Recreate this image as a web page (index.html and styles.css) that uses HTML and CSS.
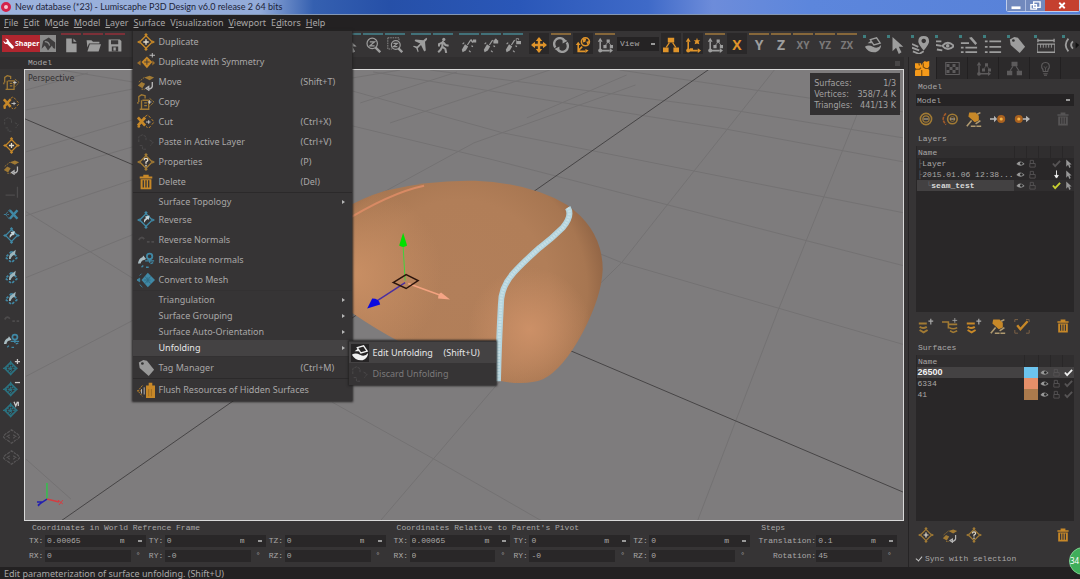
FILE: index.html
```
<!DOCTYPE html>
<html lang="en">

<head>
    <meta charset="UTF-8">
    <meta name="viewport" content="width=device-width, initial-scale=1.0">
    <title>Lumiscaphe P3D Design</title>
    <link rel="stylesheet" href="styles.css">
</head>

<body>
    <!-- icon sprite -->
    <svg class="sprite" aria-hidden="true">
        <symbol id="i-diamond" viewBox="0 0 20 20">
            <path d="M10 3L17 10L10 17L3 10Z" fill="none" stroke="currentColor" stroke-width="1.5"/>
            <path d="M10 0l2 2-2 2-2-2zM10 16l2 2-2 2-2-2zM0 10l3-2v4zM20 10l-3-2v4z" fill="currentColor"/>
            <path d="M10 7v6M7 10h6" stroke="#e4dccb" stroke-width="1.5"/>
        </symbol>
        <symbol id="i-diamond-q" viewBox="0 0 20 20">
            <path d="M10 3L17 10L10 17L3 10Z" fill="none" stroke="currentColor" stroke-width="1.5"/>
            <path d="M10 0l2 2-2 2-2-2zM10 16l2 2-2 2-2-2zM0 10l3-2v4zM20 10l-3-2v4z" fill="currentColor"/>
            <path d="M8 8q0-2 2-2t2 2q0 1-2 2v2M10 13v2" fill="none" stroke="#e4dccb" stroke-width="1.5"/>
        </symbol>
        <symbol id="i-sym" viewBox="0 0 20 20">
            <path d="M11 4L17 10L11 17L5 10Z" fill="currentColor"/>
            <path d="M0 11l4-3v6zM20 11l-3-3v6z" fill="currentColor" opacity=".7"/>
            <path d="M8 10h6M11 7v6" stroke="#3a3839"/>
            <path d="M17 0v5M14 2.5h6" stroke="#c9c9c9"/>
        </symbol>
        <symbol id="i-move" viewBox="0 0 20 20">
            <path d="M8 5l6-2 5 2-5 3zM1 14l4-4 4 2-3 5z" fill="currentColor"/>
            <path d="M2 10l6-5M5 18h4" stroke="currentColor" stroke-dasharray="2 1"/>
            <path d="M17 10v5q-1 3-5 3M10 17l3-2v4z" stroke="#b5b5b5" stroke-width="1.5" fill="none"/>
        </symbol>
        <symbol id="i-copy" viewBox="0 0 20 20">
            <path d="M2 10V4l3-2 4 1v3M1 12v-2M6 8h7v10H5V8M8 11h3M8 14h3M3 18h2" fill="none" stroke="currentColor" stroke-width="1.5"/>
            <path d="M14 6l5 4-5 5" fill="none" stroke="currentColor" stroke-dasharray="3 1"/>
            <path d="M12 10h4M14 8v4" stroke="#cfcfcf"/>
        </symbol>
        <symbol id="i-cut" viewBox="0 0 20 20">
            <path d="M1 5l8 9M9 5l-8 9" stroke="currentColor" stroke-width="3"/>
            <circle cx="2" cy="15" r="1.5" fill="currentColor"/>
            <path d="M9 4l3-2 7 8-6 7-3-2" fill="none" stroke="currentColor" stroke-dasharray="3 2"/>
            <path d="M10 10h5M13 8v4" stroke="#cfcfcf"/>
        </symbol>
        <symbol id="i-paste" viewBox="0 0 20 20">
            <path d="M2 10V4l4-2 4 2v4M3 14h3v4h4M14 8l4 2-3 4" fill="none" stroke="currentColor" stroke-dasharray="3 1"/>
        </symbol>
        <symbol id="i-trash" viewBox="0 0 20 20">
            <path d="M4 7h12v11H4zM3 4h14v2H3zM7 2h6v2H7z" fill="currentColor"/>
            <path d="M7 8v8M10 8v8M13 8v8" stroke="#3a3839" stroke-width="1.5"/>
        </symbol>
        <symbol id="i-reverse" viewBox="0 0 20 20">
            <path d="M10 3L17 10L10 17L3 10Z" fill="none" stroke="currentColor" stroke-width="1.5"/>
            <path d="M10 0l2 2-2 2-2-2zM10 16l2 2-2 2-2-2zM0 10l3-2v4zM20 10l-3-2v4z" fill="currentColor"/>
            <path d="M8 13q-1-4 2-5l-1-2 5-1-1 5-1-1q-2 1-4 4z" fill="#c4d4d9"/>
        </symbol>
        <symbol id="i-rev-dash" viewBox="0 0 20 20">
            <path d="M10 4l7 7-7 6-7-6z" fill="none" stroke="currentColor" stroke-width="2" stroke-dasharray="3 2"/>
            <path d="M7 13q0-6 3-7l5-4-1 6q-4 1-5 5z" fill="#9db6bd"/>
        </symbol>
        <symbol id="i-wave" viewBox="0 0 20 20">
            <path d="M2 10q3-5 6-1M11 12h3M16 12h3" fill="none" stroke="currentColor" stroke-width="2"/>
        </symbol>
        <symbol id="i-corner" viewBox="0 0 20 20">
            <path d="M17 2v13M3 12h11" fill="none" stroke="currentColor" stroke-width="1.5"/>
        </symbol>
        <symbol id="i-recalc" viewBox="0 0 20 20">
            <path d="M1 14q1-6 5-7l1-2 3 4-2 1q-3 0-4 4z" fill="#a9bcc2"/>
            <circle cx="14" cy="6" r="3" fill="none" stroke="currentColor" stroke-width="2"/>
            <path d="M9 11h10M14 9v4M5 18l2-2M10 18h3M15 14l3-1" stroke="currentColor" stroke-width="1.5"/>
        </symbol>
        <symbol id="i-mesh" viewBox="0 0 20 20">
            <path d="M12 2L20 10L12 18L5 10Z" fill="currentColor"/>
            <path d="M0 10l3-2v4zM3 5l2-2M3 15l3 3" stroke="currentColor" fill="currentColor"/>
            <path d="M8 10h7M12 7v6M9 6l6 8M9 14l6-8" stroke="#2e6b82"/>
        </symbol>
        <symbol id="i-del-x" viewBox="0 0 20 20">
            <path d="M8 4l-5 6 5 6M1 10h6" fill="none" stroke="currentColor" stroke-dasharray="3 1"/>
            <path d="M8 5l9 10M17 5l-9 10" stroke="currentColor" stroke-width="3"/>
        </symbol>
        <symbol id="i-net" viewBox="0 0 20 20">
            <path d="M9 4l7 7-7 7-7-7z" fill="none" stroke="currentColor" stroke-width="2"/>
            <path d="M5 8l7 7M12 8l-7 7M9 2v18M0 11h18" stroke="currentColor" stroke-width="1.5" stroke-dasharray="2 1"/>
        </symbol>
        <symbol id="i-group" viewBox="0 0 20 20">
            <path d="M5 6l5-4 5 4M5 14l5 4 5-4M4 6l-4 4 4 4M16 6l4 4-4 4M8 8l-3 2 3 2M12 8l3 2-3 2" fill="none" stroke="currentColor" stroke-width="1.5" stroke-dasharray="4 1"/>
        </symbol>
        <symbol id="i-tag" viewBox="0 0 20 20">
            <path d="M2 4l5-3 4 1 8 10-6 7L3 10z" fill="currentColor"/>
            <circle cx="6" cy="5" r="1.5" fill="#333"/>
        </symbol>
        <symbol id="i-flush" viewBox="0 0 20 20">
            <path d="M6 5l-5 6 5 6M0 11h5" fill="none" stroke="currentColor" stroke-dasharray="2 1"/>
            <path d="M10 5h10v14H10zM13 2h4v3h-4z" fill="currentColor"/>
            <path d="M5 9v5M8 7v8" stroke="#bbb"/>
            <path d="M13 9v8M16 9v8" stroke="#9a6a20"/>
        </symbol>
        <symbol id="i-unfold" viewBox="0 0 20 20">
            <path d="M1 12q4-3 9 0t9-2q0 6-6 8-8 1-12-6zM4 8l4-3 1 3z" fill="currentColor"/>
            <path d="M7 4l7-2 4 6-7 2z" fill="none" stroke="currentColor" stroke-width="1.5"/>
        </symbol>
        <symbol id="i-wrench" viewBox="0 0 20 20">
            <path d="M2 5l4 3 2-3-3-3q5-1 6 4l7 8q1 4-3 3l-7-7q-5 1-6-5z" fill="currentColor"/>
        </symbol>
        <symbol id="i-bucket" viewBox="0 0 20 20">
            <path d="M2 16L4 6l7-4 8 6v8q-3 0-4-4l-5 6-4-6z" fill="currentColor"/>
            <path d="M6 7q5 0 6 5" stroke="#8b8b8b" stroke-width="1.5" fill="none"/>
        </symbol>
        <symbol id="i-file" viewBox="0 0 20 20"><path d="M4 2h7v6h6v11H4zM13 2l4 4h-4z" fill="currentColor"/></symbol>
        <symbol id="i-folder" viewBox="0 0 20 20"><path d="M2 4h6l2 2h8v2H5l-2 5zM6 9h14l-3 9H3z" fill="currentColor"/></symbol>
        <symbol id="i-save" viewBox="0 0 20 20"><path d="M2 3h14l2 2v13H2z" fill="currentColor"/><path d="M5 4h9v5H5zM6 12h8v6H6z" fill="#3a3839"/><path d="M8 13h3v4H8z" fill="currentColor"/></symbol>
        <symbol id="i-zoom" viewBox="0 0 20 20">
            <circle cx="9" cy="8" r="6.5" fill="none" stroke="currentColor" stroke-width="1.5"/>
            <path d="M13 13l6 6" stroke="currentColor" stroke-width="3"/>
            <path d="M6 6h6l-6 5h6" fill="none" stroke="currentColor" stroke-width="1.5"/>
        </symbol>
        <symbol id="i-zoom-box" viewBox="0 0 20 20">
            <path d="M1 1h14v4M1 1v14h5" fill="none" stroke="currentColor" stroke-dasharray="2 1"/>
            <circle cx="11" cy="10" r="5.5" fill="none" stroke="currentColor" stroke-width="1.5"/>
            <path d="M14 14l5 5" stroke="currentColor" stroke-width="3"/>
            <path d="M8 8h5l-5 4h5" fill="none" stroke="currentColor" stroke-width="1.5"/>
        </symbol>
        <symbol id="i-plane" viewBox="0 0 20 20"><path d="M19 1q-3-1-6 3L3 3 2 5l7 3-4 4-4-1-1 1 4 2 2 5 1-1-1-4 4-4 4 8 2-1-1-11q4-3 2-5z" fill="currentColor"/></symbol>
        <symbol id="i-walk" viewBox="0 0 20 20">
            <circle cx="11" cy="3" r="2" fill="currentColor"/>
            <path d="M10 5L9 12 13 15 14 20M9 12L7 16 4 19M9 7L5 9V12M11 7L13 10 17 11" fill="none" stroke="currentColor" stroke-width="2.5"/>
        </symbol>
        <symbol id="i-joy" viewBox="0 0 20 20">
            <path d="M5 9l4 3-3 5-4 2-1-3z" fill="currentColor"/>
            <path d="M8 10l4-6M2 9l2-2M10 17l2 2M13 11l2 1" stroke="currentColor" stroke-width="1.5"/>
        </symbol>
        <symbol id="i-arrows" viewBox="0 0 20 20">
            <path d="M10 2v16M2 10h16" stroke="currentColor" stroke-width="3"/>
            <path d="M10 0l4 5H6zM10 20l4-5H6zM0 10l5-4v8zM20 10l-5-4v8z" fill="currentColor"/>
        </symbol>
        <symbol id="i-rotate" viewBox="0 0 20 20">
            <path d="M3 13A7 7 0 0 1 14 4M17 7A7 7 0 0 1 6 16" fill="none" stroke="currentColor" stroke-width="3"/>
            <path d="M12 1l6 4-6 3zM8 19l-6-4 6-3z" fill="currentColor"/>
        </symbol>
        <symbol id="i-axis-ball" viewBox="0 0 20 20">
            <path d="M4 9v9h9M4 17l5-5" fill="none" stroke="currentColor" stroke-width="2"/>
            <path d="M4 6l3 4H1zM17 17l-4-2v5z" fill="currentColor"/>
            <circle cx="13" cy="6" r="5" fill="none" stroke="currentColor" stroke-width="2"/>
            <path d="M10 2l4 0-1 4-3 1zM14 6l4-1-2 5z" fill="currentColor"/>
        </symbol>
        <symbol id="i-axis" viewBox="0 0 20 20">
            <path d="M4 6v11h12" fill="none" stroke="currentColor" stroke-width="2"/>
            <circle cx="4" cy="17" r="2.5" fill="currentColor"/>
            <path d="M4 1l3 5H1zM20 17l-4-3v6zM12 3h4v4h-4zM8 10h4v4H8zM16 10h4v4h-4z" fill="currentColor"/>
            <path d="M14 6l-4 5M14 6l4 5" stroke="currentColor"/>
        </symbol>
        <symbol id="i-axis-star" viewBox="0 0 20 20">
            <path d="M4 6v11h12M6 15h4" fill="none" stroke="currentColor" stroke-width="2"/>
            <circle cx="4" cy="17" r="2.5" fill="currentColor"/>
            <path d="M4 1l3 5H1zM20 17l-4-3v6zM15 1l1 3h3l-2 2 1 3-3-1-3 1 1-3-2-2h3z" fill="currentColor"/>
        </symbol>
        <symbol id="i-tree" viewBox="0 0 20 20"><path d="M6 1h8v6H6zM0 13h7v6H0zM13 13h7v6h-7z" fill="currentColor"/><path d="M8 7l-4 6M12 7l4 6" stroke="currentColor" stroke-width="1.5"/></symbol>
        <symbol id="i-cursor" viewBox="0 0 20 20"><path d="M5 1l12 11h-5l3 6-3 2-3-7-4 4z" fill="currentColor"/></symbol>
        <symbol id="i-pin" viewBox="0 0 20 20">
            <path d="M13 0q6 0 6 6 0 3-6 10-6-7-6-10 0-6 6-6zM13 3a2.5 2.5 0 1 0 .1 0z" fill="currentColor" fill-rule="evenodd"/>
            <path d="M0 9l7 3M0 13l8 3M1 17l7 3 5-3" stroke="currentColor" stroke-width="2" fill="none"/>
        </symbol>
        <symbol id="i-layer-eye" viewBox="0 0 20 20">
            <path d="M0 6h6M0 10l6 1M1 15l6 1" stroke="currentColor" stroke-width="2"/>
            <path d="M7 11q6-7 13 0-7 7-13 0z" fill="none" stroke="currentColor" stroke-width="2"/>
            <circle cx="13" cy="11" r="2" fill="currentColor"/>
        </symbol>
        <symbol id="i-list" viewBox="0 0 20 20"><path d="M1 6h3M6 6h13M1 12h3M6 12h13M1 18h3M6 18h13" stroke="currentColor" stroke-width="2"/></symbol>
        <symbol id="i-list-tool" viewBox="0 0 20 20"><path d="M1 8h9M1 13h3M6 13h13M1 18h3M6 18h13" stroke="currentColor" stroke-width="2"/><path d="M10 2l3-1 6 7-2 2z" fill="currentColor"/></symbol>
        <symbol id="i-ruler" viewBox="0 0 20 20"><path d="M0 9h20v9H0zM1 5h18M1 3v4M19 3v4" fill="none" stroke="currentColor" stroke-width="1.5"/><path d="M4 9v4M7 9v4M10 9v4M13 9v4M16 9v4" stroke="currentColor"/></symbol>
        <symbol id="i-rings" viewBox="0 0 20 20"><path d="M6 3q-6 7 0 14M11 6q-4 4 0 8" fill="none" stroke="currentColor" stroke-width="2"/><path d="M14 7l4 3-4 4z" fill="#111"/></symbol>
        <symbol id="i-puzzle" viewBox="0 0 20 20"><path d="M0 3h8l1 3 1-3 3-3 2 1 4-1v7l-2 3 2 2v8H0v-7l2-2-2-2z" fill="currentColor"/><path d="M0 11h6l2-2M11 3v5l3 2h5M9 12v8M5 3l1 3" stroke="#7a4d10" stroke-width="1.5" fill="none"/></symbol>
        <symbol id="i-checker" viewBox="0 0 20 20"><path d="M1 2h18v16H1z" fill="none" stroke="currentColor" stroke-width="1.5"/><path d="M2 4h4v4H2zM10 4h4v4h-4zM6 8h4v4H6zM14 8h4v4h-4zM2 12h4v4H2zM10 12h4v4h-4z" fill="currentColor"/></symbol>
        <symbol id="i-bulb" viewBox="0 0 20 20"><path d="M7 14q0-3-2-5-1-7 5-7t5 7q-2 2-2 5zM7 17h6M8 19h4" fill="none" stroke="currentColor" stroke-width="1.5"/><path d="M8 7l2 3 2-3M10 9v5" stroke="currentColor" fill="none"/></symbol>
        <symbol id="i-ring" viewBox="0 0 20 20"><circle cx="10" cy="10" r="7" fill="none" stroke="currentColor" stroke-width="2"/><circle cx="10" cy="10" r="4" fill="none" stroke="currentColor" stroke-width="1.5"/><path d="M7 10h6" stroke="#e8d8b8"/></symbol>
        <symbol id="i-ring2" viewBox="0 0 20 20"><path d="M5 3q-7 7 0 14" fill="none" stroke="#a35a28" stroke-width="2" stroke-dasharray="4 1"/><circle cx="13" cy="10" r="6" fill="none" stroke="currentColor" stroke-width="2"/><circle cx="13" cy="10" r="3" fill="none" stroke="currentColor"/><path d="M10 10h6" stroke="#e8d8b8"/></symbol>
        <symbol id="i-clean" viewBox="0 0 20 20"><path d="M4 2h8l4 4v6l-5 2-8-7z" fill="currentColor"/><path d="M1 19l6-7M6 19h6M12 16l6-4M14 4l4-2M13 19h6" stroke="#b09a70" stroke-width="2" fill="none"/></symbol>
        <symbol id="i-ring-in" viewBox="0 0 20 20"><path d="M0 10h6" stroke="#b5b5b5" stroke-width="2"/><path d="M5 6l4 4-4 4z" fill="#b5b5b5"/><circle cx="14" cy="10" r="5" fill="currentColor" opacity=".85"/><circle cx="14" cy="10" r="2" fill="#f5b544"/></symbol>
        <symbol id="i-ring-out" viewBox="0 0 20 20"><circle cx="6" cy="10" r="5" fill="currentColor" opacity=".85"/><circle cx="6" cy="10" r="2" fill="#f5b544"/><path d="M11 10h5" stroke="#b5b5b5" stroke-width="2"/><path d="M15 6l5 4-5 4z" fill="#b5b5b5"/></symbol>
        <symbol id="i-layer-add" viewBox="0 0 20 20"><path d="M1 7h10M2 11q4 3 9 0M2 15l5 3 5-3" fill="none" stroke="currentColor" stroke-width="2.5"/><path d="M16 1v7M13 4h6" stroke="#a9a9a9" stroke-width="1.5"/></symbol>
        <symbol id="i-layer-sub" viewBox="0 0 20 20"><path d="M0 5h8v8M9 8h10M9 12q5 3 10 0M10 16l4 2 5-2" fill="none" stroke="currentColor" stroke-width="2"/><path d="M16 0v6M13 3h6" stroke="#a9a9a9"/></symbol>
        <symbol id="i-select" viewBox="0 0 20 20"><path d="M4 9l4 5L17 4" fill="none" stroke="currentColor" stroke-width="3"/><path d="M1 5V2h4M15 2h4v3M1 15v4h4M15 19h4v-4" fill="none" stroke="#8a6b4a"/></symbol>
        <symbol id="i-eye" viewBox="0 0 20 20"><path d="M1 11q8-11 18 0-9 8-18 0z" fill="currentColor"/><circle cx="12" cy="10" r="3" fill="#222"/></symbol>
        <symbol id="i-lock" viewBox="0 0 20 20"><path d="M5 10V3h7v7M4 10h12v8H4z" fill="none" stroke="currentColor" stroke-width="2"/></symbol>
        <symbol id="i-check" viewBox="0 0 20 20"><path d="M2 10l5 6L18 4" fill="none" stroke="currentColor" stroke-width="4"/></symbol>
        <symbol id="i-down" viewBox="0 0 20 20"><path d="M10 1v14M6 12l4 6 4-6z" stroke="currentColor" stroke-width="2" fill="currentColor"/></symbol>
    </svg>

    <div class="app">
        <header class="titlebar">
            <span class="app-icon"></span>
            <h1 class="app-title">New database (*23) - Lumiscaphe P3D Design v6.0 release 2 64 bits</h1>
            <div class="window-buttons">
                <button class="win win-min" aria-label="Minimize"><svg viewBox="0 0 20 12"><path d="M5 7h10v3H5z" fill="#fff"/></svg></button>
                <button class="win win-max" aria-label="Restore"><svg viewBox="0 0 20 12"><path d="M8 2h7v6h-7zM5 5h6v5H5z" fill="none" stroke="#fff" stroke-width="1.5"/></svg></button>
                <button class="win win-close" aria-label="Close"><svg viewBox="0 0 20 12"><path d="M7 3l6 6M13 3l-6 6" stroke="#fff" stroke-width="2"/></svg></button>
            </div>
        </header>

        <nav class="menubar">
            <button class="menu-title"><u>F</u>ile</button>
            <button class="menu-title"><u>E</u>dit</button>
            <button class="menu-title">M<u>o</u>de</button>
            <button class="menu-title"><u>M</u>odel</button>
            <button class="menu-title"><u>L</u>ayer</button>
            <div class="menu-holder">
                <button class="menu-title"><u>S</u>urface</button>
                <ul class="menu">
                    <li class="item"><svg class="icon orange"><use href="#i-diamond"/></svg><span>Duplicate</span></li>
                    <li class="item"><svg class="icon orange"><use href="#i-sym"/></svg><span>Duplicate with Symmetry</span></li>
                    <li class="item"><svg class="icon tan"><use href="#i-move"/></svg><span>Move</span><kbd>(Shift+T)</kbd></li>
                    <li class="item"><svg class="icon tan"><use href="#i-copy"/></svg><span>Copy</span></li>
                    <li class="item"><svg class="icon orange"><use href="#i-cut"/></svg><span>Cut</span><kbd>(Ctrl+X)</kbd></li>
                    <li class="item"><svg class="icon faint"><use href="#i-paste"/></svg><span>Paste in Active Layer</span><kbd>(Ctrl+V)</kbd></li>
                    <li class="item"><svg class="icon tan"><use href="#i-diamond-q"/></svg><span>Properties</span><kbd>(P)</kbd></li>
                    <li class="item"><svg class="icon orange"><use href="#i-trash"/></svg><span>Delete</span><kbd>(Del)</kbd></li>
                    <li class="sep"></li>
                    <li class="item short more"><span>Surface Topology</span></li>
                    <li class="item"><svg class="icon blue"><use href="#i-reverse"/></svg><span>Reverse</span></li>
                    <li class="item"><svg class="icon faint"><use href="#i-wave"/></svg><span>Reverse Normals</span></li>
                    <li class="item"><svg class="icon blue"><use href="#i-recalc"/></svg><span>Recalculate normals</span></li>
                    <li class="item"><svg class="icon blue"><use href="#i-mesh"/></svg><span>Convert to Mesh</span></li>
                    <li class="sep plain"></li>
                    <li class="item short more"><span>Triangulation</span></li>
                    <li class="item short more"><span>Surface Grouping</span></li>
                    <li class="item short more"><span>Surface Auto-Orientation</span></li>
                    <li class="item short more open">
                        <span>Unfolding</span>
                        <ul class="submenu">
                            <li class="item open"><svg class="icon white"><use href="#i-unfold"/></svg><span>Edit Unfolding</span><kbd>(Shift+U)</kbd></li>
                            <li class="item off"><svg class="icon faint"><use href="#i-paste"/></svg><span>Discard Unfolding</span></li>
                        </ul>
                    </li>
                    <li class="sep plain"></li>
                    <li class="item"><svg class="icon grey"><use href="#i-tag"/></svg><span>Tag Manager</span><kbd>(Ctrl+M)</kbd></li>
                    <li class="sep"></li>
                    <li class="item"><svg class="icon orange"><use href="#i-flush"/></svg><span>Flush Resources of Hidden Surfaces</span></li>
                </ul>
            </div>
            <button class="menu-title">V<u>i</u>sualization</button>
            <button class="menu-title"><u>V</u>iewport</button>
            <button class="menu-title">E<u>d</u>itors</button>
            <button class="menu-title"><u>H</u>elp</button>
        </nav>

        <div class="toolbar">
            <div class="mode-switch">
                <button class="shaper"><svg class="icon"><use href="#i-wrench"/></svg>Shaper</button>
                <button class="matter" aria-label="Matter"><svg class="icon"><use href="#i-bucket"/></svg></button>
            </div>
            <div class="tools files">
                <button class="tool red-top" aria-label="New"><svg class="icon"><use href="#i-file"/></svg></button>
                <button class="tool red-top" aria-label="Open"><svg class="icon"><use href="#i-folder"/></svg></button>
                <button class="tool red-top" aria-label="Save"><svg class="icon"><use href="#i-save"/></svg></button>
            </div>
            <div class="tools">
                <button class="tool teal-top" aria-label="Pick"><svg class="icon"><use href="#i-cursor"/></svg></button>
                <button class="tool teal-top" aria-label="Zoom"><svg class="icon"><use href="#i-zoom"/></svg></button>
                <button class="tool teal-top" aria-label="Zoom box"><svg class="icon"><use href="#i-zoom-box"/></svg></button>
            </div>
            <div class="tools">
                <button class="tool teal-top" aria-label="Fly"><svg class="icon"><use href="#i-plane"/></svg></button>
                <button class="tool teal-top" aria-label="Walk"><svg class="icon"><use href="#i-walk"/></svg></button>
            </div>
            <div class="tools">
                <button class="tool teal-top" aria-label="Joystick"><svg class="icon" viewBox="0 0 20 20"><use href="#i-joy"/><path d="M12 3l3 4M16 3v4M18 3v4" stroke="currentColor" stroke-width="2"/></svg></button>
                <button class="tool teal-top" aria-label="Joystick lock"><svg class="icon" viewBox="0 0 20 20"><use href="#i-joy"/><path d="M13 4h6v4h-6zM14 4q2-4 4 0" fill="currentColor"/></svg></button>
                <button class="tool teal-top" aria-label="Joystick unlock"><svg class="icon" viewBox="0 0 20 20"><use href="#i-joy"/><path d="M14 5h6v4h-6z" fill="currentColor"/><path d="M14 5V2h3v2" fill="none" stroke="currentColor"/></svg></button>
            </div>
            <div class="tools transform">
                <button class="tool on" aria-label="Translate"><svg class="icon"><use href="#i-arrows"/></svg></button>
                <button class="tool gold-top" aria-label="Rotate"><svg class="icon"><use href="#i-rotate"/></svg></button>
                <button class="tool on" aria-label="World axis"><svg class="icon"><use href="#i-axis-ball"/></svg></button>
                <button class="tool gold-top" aria-label="Local axis"><svg class="icon"><use href="#i-axis"/></svg></button>
                <select class="view-select" aria-label="Axis frame"><option>View</option></select>
                <button class="tool on" aria-label="Hierarchy"><svg class="icon"><use href="#i-tree"/></svg></button>
                <button class="tool on" aria-label="Pivot"><svg class="icon"><use href="#i-axis-star"/></svg></button>
                <button class="tool gold-top" aria-label="Axis tree"><svg class="icon"><use href="#i-axis"/></svg></button>
                <button class="tool letter on">X</button>
                <button class="tool letter gold-top">Y</button>
                <button class="tool letter gold-top">Z</button>
                <button class="tool pair gold-top">XY</button>
                <button class="tool pair gold-top">YZ</button>
                <button class="tool pair gold-top">ZX</button>
            </div>
            <div class="tools panels">
                <button class="tool dot" aria-label="Unfold editor"><svg class="icon"><use href="#i-unfold"/></svg></button>
                <button class="tool dot" aria-label="Selection"><svg class="icon"><use href="#i-cursor"/></svg></button>
                <button class="tool dot" aria-label="Position layers"><svg class="icon"><use href="#i-pin"/></svg></button>
                <button class="tool dot" aria-label="Visibility layers"><svg class="icon"><use href="#i-layer-eye"/></svg></button>
                <button class="tool dot" aria-label="List tools"><svg class="icon"><use href="#i-list-tool"/></svg></button>
                <button class="tool dot" aria-label="List"><svg class="icon"><use href="#i-list"/></svg></button>
                <button class="tool dot" aria-label="Tags"><svg class="icon"><use href="#i-tag"/></svg></button>
                <button class="tool dot wide" aria-label="Measure"><svg class="icon"><use href="#i-ruler"/></svg></button>
                <button class="tool dot" aria-label="More"><svg class="icon"><use href="#i-rings"/></svg></button>
            </div>
        </div>

        <div class="workspace">
            <main class="center">
                <div class="tab-row"><span class="tab">Model</span><span class="tab-close"></span></div>
                <div class="stage">
                    <div class="side-tools">
                        <div class="side-group">
                            <button aria-label="Copy"><svg class="icon tan"><use href="#i-copy"/></svg></button>
                            <button aria-label="Cut"><svg class="icon orange"><use href="#i-cut"/></svg></button>
                            <button aria-label="Paste"><svg class="icon faint"><use href="#i-paste"/></svg></button>
                            <button aria-label="Duplicate"><svg class="icon orange"><use href="#i-diamond"/></svg></button>
                            <button aria-label="Move"><svg class="icon tan"><use href="#i-move"/></svg></button>
                        </div>
                        <div class="side-group">
                            <button aria-label="Corner"><svg class="icon faint"><use href="#i-corner"/></svg></button>
                            <button aria-label="Remove"><svg class="icon blue"><use href="#i-del-x"/></svg></button>
                            <button aria-label="Reverse"><svg class="icon blue"><use href="#i-reverse"/></svg></button>
                            <button aria-label="Reverse patch"><svg class="icon blue"><use href="#i-rev-dash"/></svg></button>
                            <button aria-label="Reverse group"><svg class="icon blue"><use href="#i-rev-dash"/></svg></button>
                            <button aria-label="Reverse all"><svg class="icon blue"><use href="#i-rev-dash"/></svg></button>
                            <button aria-label="Normals"><svg class="icon faint"><use href="#i-wave"/></svg></button>
                            <button aria-label="Recalculate"><svg class="icon blue"><use href="#i-recalc"/></svg></button>
                        </div>
                        <div class="side-group">
                            <button aria-label="Add mesh"><svg class="icon sea" viewBox="0 0 20 20"><use href="#i-net"/><path d="M17 0v6M14 3h6" stroke="#c9c9c9" stroke-width="1.5"/></svg></button>
                            <button aria-label="Remove mesh"><svg class="icon sea" viewBox="0 0 20 20"><use href="#i-net"/><path d="M14 3h6" stroke="#c9c9c9" stroke-width="1.5"/></svg></button>
                            <button aria-label="Mesh percent"><svg class="icon sea" viewBox="0 0 20 20"><use href="#i-net"/><path d="M13 1l2 5 2-5M18 1v5" fill="none" stroke="#c9c9c9" stroke-width="1.5"/></svg></button>
                        </div>
                        <div class="side-group">
                            <button aria-label="Group"><svg class="icon dim"><use href="#i-group"/></svg></button>
                            <button aria-label="Ungroup"><svg class="icon dim"><use href="#i-group"/></svg></button>
                        </div>
                    </div>
                    <div class="viewport">
                        <svg class="scene" viewBox="24 69 880 453" preserveAspectRatio="xMidYMid slice">
                            <defs>
                                <radialGradient id="skin" gradientUnits="userSpaceOnUse" cx="460" cy="290" r="150">
                                    <stop offset="0" stop-color="#b27f5a"/>
                                    <stop offset=".6" stop-color="#b17e58"/>
                                    <stop offset=".85" stop-color="#a77651"/>
                                    <stop offset="1" stop-color="#8f6344"/>
                                </radialGradient>
                                <radialGradient id="glow" gradientUnits="userSpaceOnUse" cx="530" cy="330" r="62">
                                    <stop offset="0" stop-color="#cc9067"/>
                                    <stop offset="1" stop-color="#cc9067" stop-opacity="0"/>
                                </radialGradient>
                                <radialGradient id="glow-left" gradientUnits="userSpaceOnUse" cx="352" cy="275" r="90">
                                    <stop offset="0" stop-color="#c98f64"/>
                                    <stop offset="1" stop-color="#c98f64" stop-opacity="0"/>
                                </radialGradient>
                                <path id="shape" d="M340 211Q362 198 385 191Q430 180 475 181Q530 183 567 205Q603 230 603 270Q602 297 583 333Q563 370 543 380Q525 387 497 381L430 356Q390 341 340 305Z"/>
                            </defs>
                            <!-- floor grid -->
                            <g class="grid">
                                <path d="M871 73L857 117L778 313L698 522M775 70L690 177L622 263L499 383L380 522M636 85L474 143L340 216M352 78L400 70M360 103L457 72M390 123L550 70M527 118L627 75"/>
                                <path d="M25 278L132 235M25 216L132 180M25 178L132 147M25 152L132 120M25 110L132 89M25 90L87 73M25 377L132 321"/>
                                <path d="M620 70L904 112M430 70L720 108L904 138M373 72L720 128L904 162M352 91L503 133L904 213M352 126L493 160L904 266M590 250L622 263L904 345M332 403L434 460L542 522M25 212L134 280M25 460L70 500M60 70L132 82"/>
                            </g>
                            <path class="grid-axis" d="M24 119L904 493M710 69L60 522"/>
                            <!-- model -->
                            <use href="#shape" fill="url(#skin)"/>
                            <use href="#shape" fill="url(#glow)"/>
                            <use href="#shape" fill="url(#glow-left)"/>
                            <path class="seam-old" d="M340 224Q390 193 424 186"/>
                            <path class="seam" d="M568 208Q573 216 563 228Q552 239 540 248Q523 263 514 273Q501 287 501 305Q499 340 498 382"/>
                            <path class="seam-mesh" d="M568 208Q573 216 563 228Q552 239 540 248Q523 263 514 273Q501 287 501 305Q499 340 498 382"/>
                            <!-- move gizmo -->
                            <path d="M405 281L403 247" stroke="#3ed33c"/>
                            <path d="M403 233l4 13q-4 3-8 0z" fill="#00e100"/>
                            <path d="M405 283L376 302" stroke="#4b2fa0" stroke-width="1.5"/>
                            <path d="M367 309l5-10q7 0 8 6z" fill="#0a0ae0"/>
                            <path d="M408 284L441 296" stroke="#f3a27f" stroke-width="1.5"/>
                            <path d="M450 300l-12-1q0-4 3-6z" fill="#f5a585"/>
                            <path d="M393 283L406 275L418 281L406 289Z" fill="none" stroke="#2b140c" stroke-width="1.5"/>
                            <!-- world axis -->
                            <path d="M46 500V484" stroke="#35c04d" stroke-width="1.5"/>
                            <path d="M46 500L58 503" stroke="#d63c40" stroke-width="1.5"/>
                            <path d="M46 500L37 506M36 503h5l-4 4" fill="none" stroke="#231fb0" stroke-width="1.5"/>
                            <path d="M57 501l5 4M62 501l-4 5" stroke="#d63c40"/>
                        </svg>
                        <span class="view-name">Perspective</span>
                        <dl class="stats">
                            <dt>Surfaces:</dt><dd>1/3</dd>
                            <dt>Vertices:</dt><dd>358/7.4 K</dd>
                            <dt>Triangles:</dt><dd>441/13 K</dd>
                        </dl>
                    </div>
                </div>

                <form class="coords">
                    <fieldset>
                        <legend>Coordinates in World Refrence Frame</legend>
                        <div class="fields">
                            <div class="field"><label for="wtx">TX:</label><div class="box"><input id="wtx" value="0.00065"><select aria-label="TX unit"><option>m</option></select></div></div>
                            <div class="field"><label for="wty">TY:</label><div class="box"><input id="wty" value="0"><select aria-label="TY unit"><option>m</option></select></div></div>
                            <div class="field"><label for="wtz">TZ:</label><div class="box"><input id="wtz" value="0"><select aria-label="TZ unit"><option>m</option></select></div></div>
                            <div class="field"><label for="wrx">RX:</label><div class="box"><input id="wrx" value="0"></div><i>°</i></div>
                            <div class="field"><label for="wry">RY:</label><div class="box"><input id="wry" value="-0"></div><i>°</i></div>
                            <div class="field"><label for="wrz">RZ:</label><div class="box"><input id="wrz" value="0"></div><i>°</i></div>
                        </div>
                    </fieldset>
                    <fieldset>
                        <legend>Coordinates Relative to Parent's Pivot</legend>
                        <div class="fields">
                            <div class="field"><label for="ptx">TX:</label><div class="box"><input id="ptx" value="0.00065"><select aria-label="TX unit"><option>m</option></select></div></div>
                            <div class="field"><label for="pty">TY:</label><div class="box"><input id="pty" value="0"><select aria-label="TY unit"><option>m</option></select></div></div>
                            <div class="field"><label for="ptz">TZ:</label><div class="box"><input id="ptz" value="0"><select aria-label="TZ unit"><option>m</option></select></div></div>
                            <div class="field"><label for="prx">RX:</label><div class="box"><input id="prx" value="0"></div><i>°</i></div>
                            <div class="field"><label for="pry">RY:</label><div class="box"><input id="pry" value="-0"></div><i>°</i></div>
                            <div class="field"><label for="prz">RZ:</label><div class="box"><input id="prz" value="0"></div><i>°</i></div>
                        </div>
                    </fieldset>
                    <fieldset class="steps">
                        <legend>Steps</legend>
                        <div class="fields">
                            <div class="field"><label for="st">Translation:</label><div class="box"><input id="st" value="0.1"><select aria-label="Step unit"><option>m</option></select></div></div>
                            <div class="field"><label for="sr">Rotation:</label><div class="box"><input id="sr" value="45"></div><i>°</i></div>
                        </div>
                    </fieldset>
                </form>
            </main>

            <aside class="sidebar">
                <div class="side-tabs">
                    <button class="active" aria-label="Model"><svg class="icon"><use href="#i-puzzle"/></svg></button>
                    <button aria-label="Textures"><svg class="icon"><use href="#i-checker"/></svg></button>
                    <button aria-label="Positions"><svg class="icon"><use href="#i-axis"/></svg></button>
                    <button aria-label="Tree"><svg class="icon"><use href="#i-tree"/></svg></button>
                    <button aria-label="Lights"><svg class="icon"><use href="#i-bulb"/></svg></button>
                </div>
                <label class="heading" for="model">Model</label>
                <select id="model" class="model-select"><option>Model</option></select>
                <div class="actions">
                    <button aria-label="New model"><svg class="icon tan"><use href="#i-ring"/></svg></button>
                    <button aria-label="Duplicate model"><svg class="icon tan"><use href="#i-ring2"/></svg></button>
                    <button aria-label="Clean model"><svg class="icon orange"><use href="#i-clean"/></svg></button>
                    <button aria-label="Import"><svg class="icon amber"><use href="#i-ring-in"/></svg></button>
                    <button aria-label="Export"><svg class="icon amber"><use href="#i-ring-out"/></svg></button>
                    <button class="last" aria-label="Delete model"><svg class="icon dim"><use href="#i-trash"/></svg></button>
                </div>
                <h2 class="heading">Layers</h2>
                <div class="list">
                    <table class="layers">
                        <thead>
                            <tr><th>Name</th><th></th><th></th><th></th><th></th><th></th></tr>
                        </thead>
                        <tbody>
                            <tr><td class="branch">Layer</td><td><svg class="icon grey"><use href="#i-eye"/></svg></td><td><svg class="icon dim"><use href="#i-lock"/></svg></td><td></td><td><svg class="icon dim"><use href="#i-check"/></svg></td><td><svg class="icon grey"><use href="#i-cursor"/></svg></td></tr>
                            <tr><td class="branch">2015.01.06 12:38...</td><td><svg class="icon grey"><use href="#i-eye"/></svg></td><td><svg class="icon dim"><use href="#i-lock"/></svg></td><td></td><td><svg class="icon white"><use href="#i-down"/></svg></td><td><svg class="icon grey"><use href="#i-cursor"/></svg></td></tr>
                            <tr class="picked"><td class="leaf"><b>seam_test</b></td><td><svg class="icon grey"><use href="#i-eye"/></svg></td><td><svg class="icon dim"><use href="#i-lock"/></svg></td><td></td><td><svg class="icon lime"><use href="#i-check"/></svg></td><td><svg class="icon grey"><use href="#i-cursor"/></svg></td></tr>
                        </tbody>
                    </table>
                </div>
                <div class="actions">
                    <button aria-label="Add layer"><svg class="icon tan"><use href="#i-layer-add"/></svg></button>
                    <button aria-label="Add sub layer"><svg class="icon tan"><use href="#i-layer-sub"/></svg></button>
                    <button aria-label="Add group layer"><svg class="icon orange"><use href="#i-layer-add"/></svg></button>
                    <button aria-label="Clean layers"><svg class="icon orange"><use href="#i-clean"/></svg></button>
                    <button aria-label="Select layer"><svg class="icon orange"><use href="#i-select"/></svg></button>
                    <button class="last" aria-label="Delete layer"><svg class="icon orange"><use href="#i-trash"/></svg></button>
                </div>
                <h2 class="heading">Surfaces</h2>
                <div class="list">
                    <table class="surfaces">
                        <thead>
                            <tr><th>Name</th><th></th><th></th><th></th><th></th></tr>
                        </thead>
                        <tbody>
                            <tr class="current"><td>26500</td><td class="sky"></td><td><svg class="icon grey"><use href="#i-eye"/></svg></td><td><svg class="icon dim"><use href="#i-lock"/></svg></td><td><svg class="icon white"><use href="#i-check"/></svg></td></tr>
                            <tr><td>6334</td><td class="salmon"></td><td><svg class="icon grey"><use href="#i-eye"/></svg></td><td><svg class="icon dim"><use href="#i-lock"/></svg></td><td><svg class="icon dim"><use href="#i-check"/></svg></td></tr>
                            <tr><td>41</td><td class="brown"></td><td><svg class="icon grey"><use href="#i-eye"/></svg></td><td><svg class="icon dim"><use href="#i-lock"/></svg></td><td><svg class="icon dim"><use href="#i-check"/></svg></td></tr>
                        </tbody>
                    </table>
                </div>
                <div class="actions">
                    <button aria-label="Duplicate surface"><svg class="icon tan"><use href="#i-diamond"/></svg></button>
                    <button aria-label="Move surface"><svg class="icon tan"><use href="#i-move"/></svg></button>
                    <button aria-label="Surface properties"><svg class="icon tan"><use href="#i-diamond-q"/></svg></button>
                    <button class="last" aria-label="Delete surface"><svg class="icon orange"><use href="#i-trash"/></svg></button>
                </div>
                <label class="sync"><input type="checkbox" checked>Sync with selection</label>
            </aside>
        </div>

        <footer class="statusbar">Edit parameterization of surface unfolding. (Shift+U)</footer>
        <span class="badge">34</span>
    </div>
</body>

</html>
```
FILE: styles.css
```
* {
    box-sizing: border-box;
    margin: 0;
    padding: 0;
}

body {
    background: #363435;
    color: #a9a7a7;
    font: 9px/12px "Noto Sans", "Open Sans", sans-serif;
    overflow: hidden;
}

button, input, select {
    border: 0;
    background: none;
    color: inherit;
    font: inherit;
}

select {
    appearance: none;
}

ul {
    list-style: none;
}

.sprite {
    display: none;
}

.icon {
    display: block;
    flex: none;
    width: 18px;
    height: 18px;
}

.orange { color: #c78828; }
.amber { color: #bd6a1c; }
.tan { color: #a17a34; }
.blue { color: #4088a5; }
.sea { color: #2b7281; }
.grey { color: #989898; }
.white { color: #f0f0f0; }
.lime { color: #c8d030; }
.dim { color: #565455; }
.faint { color: #4d4b4c; }

.app {
    position: relative;
    display: flex;
    flex-direction: column;
    height: 100vh;
    overflow: hidden;
}

/* title bar */
.titlebar {
    display: flex;
    align-items: center;
    flex: none;
    height: 15px;
    border-bottom: 1px solid #8397b5;
    background: linear-gradient(90deg, #9db3dd 0, #93abd9 24%, #3560b0 29%, #2650a8 36%, #2a57b8 48%, #3f6ac8 60%, #6d8cda 66%, #5c86dc 75%, #5781d8 100%);
}

.app-icon {
    width: 10px;
    height: 10px;
    margin: 0 4px 0 1px;
    border: 3px solid #d4214a;
    border-radius: 50%;
    background: #f7c6d0;
}

.app-title {
    flex: 1;
    color: #1c2338;
    font: 9px/14px Lato, sans-serif;
}

.window-buttons {
    display: flex;
    align-self: flex-start;
    border: 1px solid #c0cdea;
    border-top: 0;
    border-radius: 0 0 3px 3px;
}

.win {
    width: 18px;
    height: 11px;
    background: #7189bd;
}

.win svg {
    display: block;
    width: 100%;
    height: 11px;
}

.win-max {
    width: 20px;
    border-left: 1px solid #a9b9de;
}

.win-close {
    width: 34px;
    background: #c5402f;
}

/* menu bar */
.menubar {
    display: flex;
    flex: none;
    gap: 5px;
    height: 16px;
    padding-left: 4px;
    background: #232122;
}

.menu-title {
    height: 16px;
    line-height: 16px;
    white-space: nowrap;
}

.menu-holder {
    position: relative;
}

.menu, .submenu {
    position: absolute;
    z-index: 5;
    background: #363435;
    box-shadow: 0 0 2px 1px #242223;
}

.menu {
    top: 16px;
    left: -1px;
    width: 219px;
    padding: 1px 0;
}

.item {
    display: flex;
    align-items: center;
    height: 20px;
    padding-left: 26px;
    white-space: nowrap;
}

.item .icon {
    margin: 0 4px 0 -22px;
}

.item span {
    flex: 1;
}

.menu kbd {
    width: 51px;
    font: inherit;
}

.item.short {
    height: 16px;
}

.more::after {
    content: "";
    margin-right: 7px;
    border: 2px solid transparent;
    border-left: 3px solid #b5b5b5;
    border-right: 0;
}

.item.open {
    background: #444243;
    color: #e6e6e6;
}

.sep {
    height: 2px;
    border-top: 1px solid #2b292a;
}

.sep.plain {
    border-color: #333132;
}

.menu .more.open {
    position: relative;
}

.submenu {
    top: 1px;
    left: 216px;
    width: 147px;
    padding: 1px 0;
}

.submenu .item {
    height: 21px;
    padding-left: 24px;
}

.submenu .open .icon {
    background: #262425;
}

.submenu .off {
    color: #7b797a;
}

.submenu kbd {
    width: 52px;
}

/* toolbar */
.toolbar {
    display: flex;
    flex: none;
    height: 26px;
    padding: 2px 0 0 2px;
    background: #363435;
}

.mode-switch {
    display: flex;
    width: 54px;
    height: 17px;
    margin: 2px 4px 0 0;
}

.shaper {
    display: flex;
    align-items: center;
    width: 38px;
    background: #b0262f;
    color: #fff;
    font: bold 7px/17px "Noto Sans", sans-serif;
}

.shaper .icon {
    width: 13px;
    height: 14px;
}

.matter {
    flex: 1;
    background: #8b8b8b;
    color: #3f3d3e;
}

.matter .icon {
    width: 16px;
    height: 16px;
}

.tools {
    display: flex;
    flex: none;
    margin-right: 4px;
}

.files {
    min-width: 280px;
    margin-right: 0;
}

.tool {
    display: flex;
    align-items: center;
    justify-content: center;
    flex: none;
    width: 20px;
    height: 21px;
    margin: 0 1px;
    border-top: 2px solid transparent;
    color: #9d9d9d;
}

.tool .icon {
    width: 16px;
    height: 16px;
}

.red-top { border-color: #7c3038; }
.teal-top { border-color: #427179; }
.gold-top { border-color: #86673a; }

.tool.on {
    background: #2a2829;
    color: #e0942a;
}

.letter {
    font: bold 14px/18px "Open Sans", sans-serif;
}

.pair {
    color: #7b7979;
    font: bold 10px/18px "Noto Sans", sans-serif;
}

.view-select {
    width: 42px;
    height: 14px;
    margin: 4px 1px 0;
    padding-left: 3px;
    font: 8px/14px "Liberation Mono", monospace;
}

.view-select, .model-select, .box select {
    background: #252324 linear-gradient(#999, #999) no-repeat right 4px center / 4px 2px;
}

.panels {
    gap: 2px;
    margin: 0;
}

.dot {
    background: linear-gradient(#3f7f80, #3f7f80) no-repeat 0 0 / 3px 3px;
}

.panels .icon {
    width: 18px;
    height: 18px;
}

.tool.wide {
    width: 24px;
    margin-left: 4px;
}

/* workspace */
.workspace {
    display: flex;
    flex: 1;
    min-height: 0;
}

.center {
    display: flex;
    flex: 1;
    flex-direction: column;
    min-width: 0;
    padding-right: 4px;
}

.tab-row {
    display: flex;
    align-items: center;
    justify-content: space-between;
    flex: none;
    height: 12px;
    padding: 0 4px 0 28px;
    background: #302e2f;
    font: 8px/12px "Liberation Mono", monospace;
}

.tab-close {
    width: 5px;
    height: 5px;
    background: #484647;
}

.stage {
    display: flex;
    flex: 1;
    min-height: 0;
}

.side-tools {
    flex: none;
    width: 24px;
    padding: 3px 0 0 3px;
}

.side-group {
    margin-bottom: 6px;
}

.side-group button {
    display: block;
    height: 21px;
}

.side-group .icon {
    width: 17px;
    height: 17px;
}

.viewport {
    position: relative;
    flex: 1;
    min-width: 0;
    border: 1px solid #d9d9d9;
    background: #7e7c7d;
    overflow: hidden;
}

.scene {
    display: block;
    width: 100%;
    height: 100%;
}

.grid {
    fill: none;
    stroke: #737172;
}

.grid-axis {
    fill: none;
    stroke: #464445;
}

.seam-old {
    fill: none;
    stroke: #d88a64;
    stroke-width: 2;
}

.seam {
    fill: none;
    stroke: #b3d3dd;
    stroke-width: 6;
}

.seam-mesh {
    fill: none;
    stroke: #c6dfe5;
    stroke-width: 3;
    stroke-dasharray: 2 1;
}

.view-name {
    position: absolute;
    top: 3px;
    left: 3px;
    color: #323031;
    font: 8px/12px "DejaVu Sans", sans-serif;
}

.stats {
    position: absolute;
    top: 3px;
    right: 3px;
    display: grid;
    grid-template-columns: auto auto;
    column-gap: 5px;
    padding: 5px 4px 4px;
    background: #323031;
    color: #a3a1a1;
    font: 8px/11px "DejaVu Sans", sans-serif;
}

.stats dd {
    text-align: right;
}

/* coordinates */
.coords {
    display: grid;
    grid-template-columns: 360fr 360fr 142fr;
    gap: 5px;
    flex: none;
    height: 46px;
    padding: 0 4px 0 29px;
    font: 8px/12px "Liberation Mono", monospace;
}

fieldset {
    min-width: 0;
    border: 0;
}

legend {
    height: 14px;
    padding-left: 3px;
    line-height: 14px;
    white-space: nowrap;
}

.fields {
    display: grid;
    grid-template-columns: repeat(3, 1fr);
    row-gap: 3px;
}

.field {
    display: flex;
    min-width: 0;
    padding-right: 3px;
}

.field label {
    flex: none;
    width: 16px;
}

.field i {
    width: 15px;
    padding-left: 5px;
    font-style: normal;
}

.box {
    display: flex;
    flex: 1;
    min-width: 0;
    height: 12px;
    background: #292728;
}

.box input {
    flex: 1;
    min-width: 0;
    height: 12px;
    padding-left: 2px;
}

.box select {
    width: 26px;
    height: 12px;
    background-color: #292728;
}

.steps .fields {
    grid-template-columns: 1fr;
}

.steps .field label {
    width: 58px;
    text-align: right;
}

/* right panel */
.sidebar {
    display: flex;
    flex: none;
    flex-direction: column;
    width: 172px;
    padding: 0 6px 0 7px;
    border-left: 1px solid #262425;
    background: #363435;
    font: 8px/11px "Liberation Mono", monospace;
}

.side-tabs {
    display: flex;
    flex: none;
    height: 22px;
    margin: 0 -6px 0 -7px;
    background: #2c2a2b;
}

.side-tabs button {
    display: flex;
    align-items: center;
    justify-content: center;
    width: 31px;
    border-right: 1px solid #222021;
    color: #5d5b5c;
}

.side-tabs .icon {
    width: 15px;
    height: 15px;
}

.side-tabs .active {
    width: 28px;
    background: #363435;
    color: #f59a1a;
}

.heading {
    flex: none;
    height: 15px;
    padding-left: 2px;
    font-size: 8px;
    font-weight: 400;
    line-height: 15px;
}

.model-select {
    flex: none;
    height: 12px;
    padding-left: 1px;
}

.actions {
    display: flex;
    align-items: center;
    flex: none;
    gap: 8px;
    height: 28px;
    padding: 0 3px 0 2px;
}

.model-select + .actions {
    height: 25px;
}

.actions .icon {
    width: 16px;
    height: 16px;
}

.actions .last {
    margin-left: auto;
}

.list {
    flex: 1;
    min-height: 0;
    background: #292728;
}

table {
    width: 100%;
    table-layout: fixed;
    border-collapse: collapse;
}

th, td {
    width: 12px;
    height: 11px;
    line-height: 11px;
    overflow: hidden;
    white-space: nowrap;
}

thead tr {
    background: #302e2f;
}

th {
    height: 12px;
    border-left: 1px solid #292728;
    font-weight: 400;
    text-align: left;
}

th:first-child, td:first-child {
    width: auto;
    padding-left: 1px;
}

td .icon {
    width: 9px;
    height: 9px;
    margin: 0 auto;
}

.branch::before {
    content: "├";
    color: #6c6a6a;
}

.leaf::before {
    content: "└";
    color: #6c6a6a;
}

td.leaf:first-child {
    padding-left: 10px;
}

.picked td {
    background: #302e2f;
}

.picked td:first-child {
    background: #434142;
}

.picked b {
    color: #d9d9d9;
}

.surfaces th:nth-child(2) {
    width: 14px;
}

.current td {
    background: #444243;
    color: #f2f2f2;
    font: bold 9px/11px "Liberation Sans", sans-serif;
}

.surfaces .sky { background: #6cc4ee; }
.surfaces .salmon { background: #e58f69; }
.surfaces .brown { background: #ab7a4c; }

.sync {
    display: flex;
    align-items: center;
    flex: none;
    gap: 3px;
    height: 18px;
}

.sync input {
    appearance: none;
    width: 4px;
    height: 6px;
    margin: 0 1px;
    border: solid #c5c5c5;
    border-width: 0 1px 1px 0;
    transform: rotate(40deg);
}

.statusbar {
    flex: none;
    height: 12px;
    padding-left: 4px;
    background: #232122;
    line-height: 13px;
    white-space: nowrap;
}

.badge {
    position: absolute;
    right: -17px;
    bottom: 4px;
    width: 28px;
    height: 28px;
    border: 1px solid #7fce90;
    border-radius: 50%;
    background: #3fae5a;
    color: #fff;
    font-size: 8px;
    line-height: 26px;
}
```
